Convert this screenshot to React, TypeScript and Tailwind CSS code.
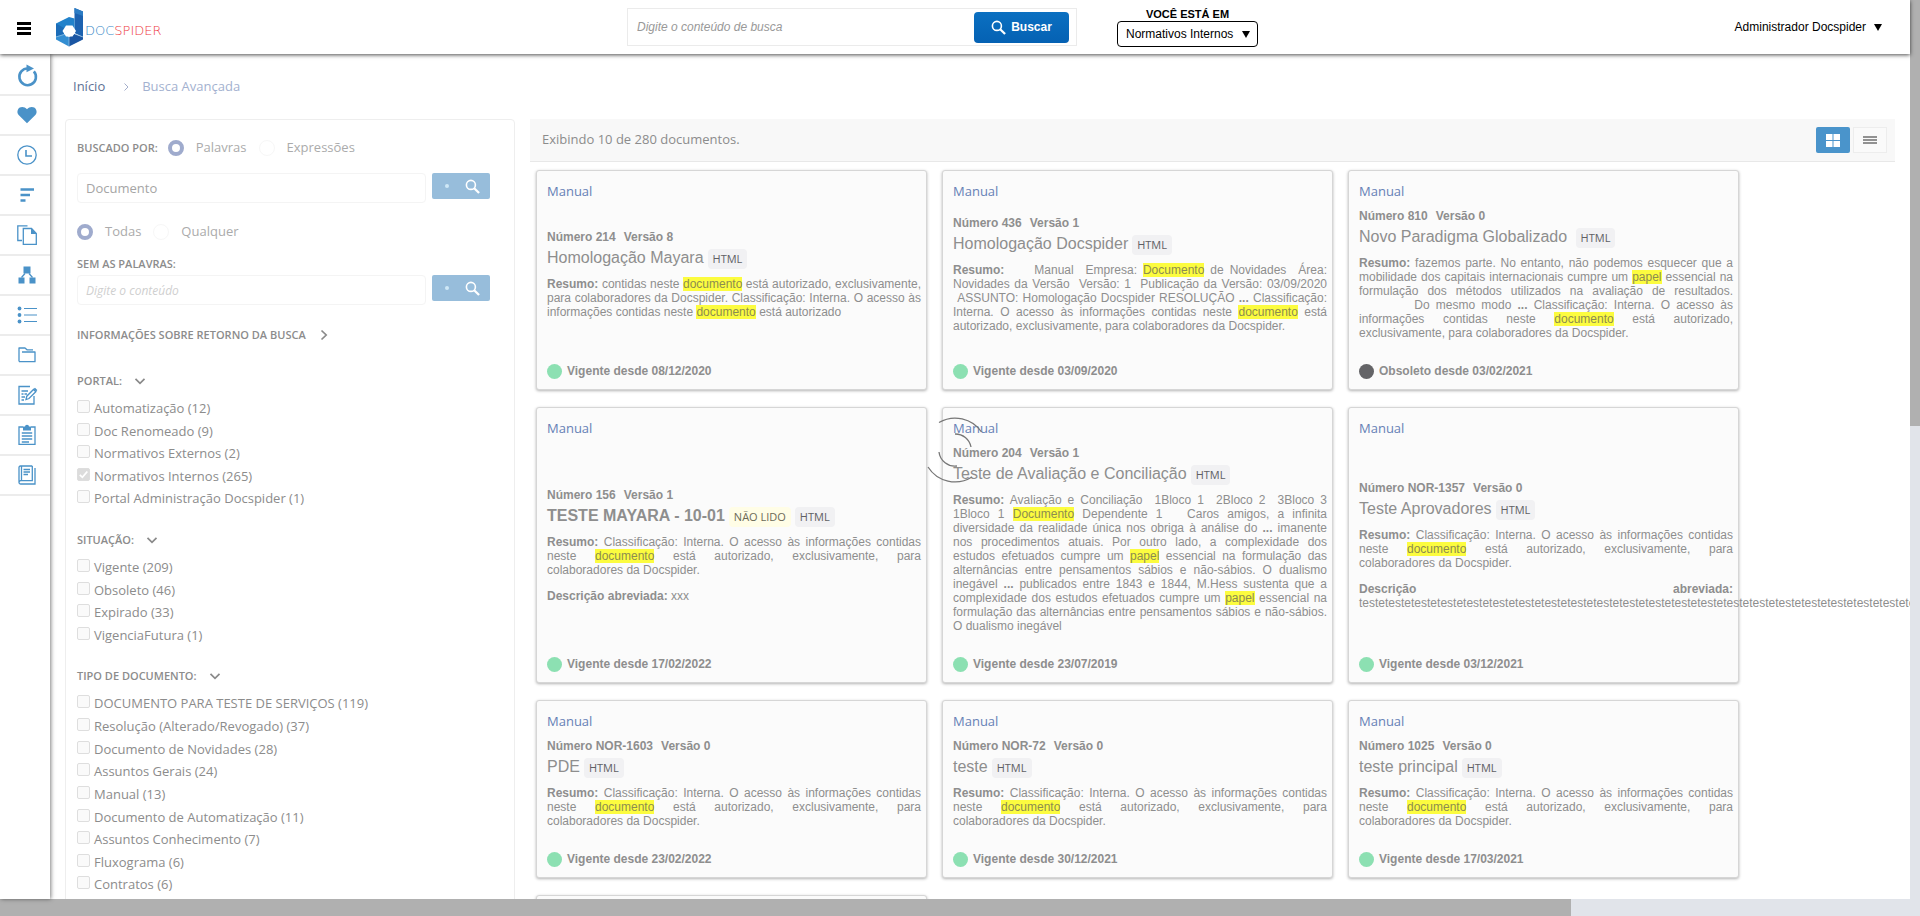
import React from "react";

const NB = "\u00a0";

const railIcons: { name: string; art: React.ReactNode }[] = [
  {
    name: "Atualizar",
    art: (
      <>
        <path d="M14.6 4.1A8.3 8.3 0 1 1 8.2 3.7" transform="rotate(22 10 11)" fill="none" strokeWidth="2.6" />
        <path d="M9.5 -0.5 17 3.500 9.5 7.2Z" stroke="none" />
      </>
    ),
  },
  {
    name: "Favoritos",
    art: <path stroke="none" d="M10 18.3 1.9 10.2A5 5 0 0 1 1 4.5C2.6 1.500 7.200 1.200 10 4.300c2.800-3.100 7.400-2.800 9 .2a5 5 0 0 1-.9 5.700Z" />,
  },
  {
    name: "Recentes",
    art: (
      <g fill="none" strokeWidth="1.3">
        <circle cx="10" cy="10" r="9.2" />
        <path d="M9 5v6h6" strokeWidth="1.6" />
      </g>
    ),
  },
  { name: "Ordenar", art: <path fill="none" strokeWidth="2.6" d="M3.500 4.500H17M3.500 10H13M3.500 15.500H8.500" /> },
  {
    name: "Copiar",
    art: (
      <>
        <path fill="none" strokeWidth="1.3" d="M5 15.500H.8V.8H10.500M6.300 3.500H14.500L19.300 8.500V19.300H6.300Z" />
        <path stroke="none" d="M14 3.300 19.500 9H14Z" />
      </>
    ),
  },
  {
    name: "Estrutura",
    art: (
      <>
        <path stroke="none" d="M6.500 1.500h7v7h-7ZM1.500 12.500h6V18.500h-6ZM12.500 12.500h6V18.500h-6Z" />
        <path fill="none" strokeWidth="1.3" d="M8 8.500 4.500 12.500M12 8.500l3.500 4" />
      </>
    ),
  },
  {
    name: "Lista",
    art: (
      <>
        <path fill="none" strokeWidth="1.200" d="M7 3.500H20M7 10H20M7 16.500H20" />
        <circle cx="2.500" cy="3.500" r="1.900" stroke="none" />
        <circle cx="2.500" cy="10" r="1.900" stroke="none" />
        <circle cx="2.500" cy="16.500" r="1.900" stroke="none" />
      </>
    ),
  },
  { name: "Pastas", art: <path fill="none" strokeWidth="1.300" strokeLinejoin="round" d="M2 16.500V3H8L10 4.800H16M5 7H18V16.700H2" /> },
  {
    name: "Editar",
    art: (
      <>
        <path fill="none" strokeWidth="1.300" d="M13 1.500H2V19H17V11M4.500 6H11M4.500 9H6.500M7.500 9H10M4.500 12H8M4.500 15H7" />
        <path fill="none" strokeWidth="1.300" d="M9 14.500l.8-3.300L16.500 4.500l2.300 2.200L12 13.500Z" />
        <path stroke="none" d="M16.500 4 18 2.800 20.300 5 19.300 6.500Z" />
      </>
    ),
  },
  {
    name: "Tarefas",
    art: (
      <>
        <path fill="none" strokeWidth="1.300" d="M6 2H2V19.300H18V2H14M4.800 8H15.200M4.800 11H15.200M4.800 14H15.200M4.800 17H12" />
        <path stroke="none" d="M6 1.500H8a2 1.800 0 0 1 4 0h2V5.500H6Z" />
      </>
    ),
  },
  {
    name: "Biblioteca",
    art: (
      <path fill="none" strokeWidth="1.300" d="M15.300 1H3.500Q2 1 2 2.500V17.500Q2 19 3.500 19H18V3M4.500 1V15.500M15.300 1V15.700H3.500Q2 16 2 17.500M6.500 4.500H13M6.500 7H13M6.500 9.500H11" />
    ),
  },
];

function Magnifier({ className }: { className: string }) {
  return (
    <svg viewBox="0 0 16 16" className={className} fill="none" stroke="currentColor" aria-hidden="true">
      <circle cx="6.300" cy="6.300" r="4.800" strokeWidth="1.700" />
      <path d="M9.800 9.800 15 15" strokeWidth="2.400" />
    </svg>
  );
}

function Chevron({ open }: { open: boolean }) {
  return (
    <svg viewBox="0 0 12 12" className="size-3" fill="none" stroke="#8a8a8a" strokeWidth="1.700" aria-hidden="true">
      {open ? <path d="M1.500 3.800 6 8.400l4.500-4.600" /> : <path d="M3.500 1.500 8.200 6l-4.700 4.500" />}
    </svg>
  );
}

function Triangle() {
  return (
    <svg viewBox="0 0 8 8" className="pointer-events-none size-2" aria-hidden="true">
      <path d="M0 1h8L4 8Z" fill="#000" />
    </svg>
  );
}

function Radio({ name, label, on }: { name: string; label: string; on?: boolean }) {
  return (
    <label className="flex items-center gap-3 text-[13px] text-[#ababab]">
      <input
        type="radio"
        name={name}
        defaultChecked={on}
        className="size-4 appearance-none rounded-full border border-[#f7f7f7] checked:border-4 checked:border-[#9fabcd]"
      />
      {label}
    </label>
  );
}

function SearchLine({ id, label, value, placeholder }: { id: string; label: string; value?: string; placeholder?: string }) {
  return (
    <div className="flex items-start gap-1.5">
      <input
        id={id}
        aria-label={label}
        defaultValue={value}
        placeholder={placeholder}
        className="h-[30px] w-[349px] rounded-sm border border-[#f4f4f4] bg-white px-2 text-[13px] text-[#a5a5a5] placeholder:text-xs placeholder:text-[#cfcfcf] placeholder:italic"
      />
      <button aria-label={"Buscar: " + label} className="flex h-[26px] w-[58px] items-center justify-end gap-4 rounded-xs bg-[#97bddb] pr-2.5 text-white">
        <span className="size-1 rounded-full bg-[#cfe8f6]" />
        <Magnifier className="size-[15px]" />
      </button>
    </div>
  );
}

function SectionTitle({ text, open }: { text: string; open: boolean }) {
  return (
    <button className="flex h-5 items-center gap-3 text-[11px] font-semibold text-[#8c8c8c]">
      {text}
      <Chevron open={open} />
    </button>
  );
}

function Facet({ title, options, checked }: { title: string; options: string[]; checked?: string }) {
  return (
    <section className="mt-5">
      <SectionTitle text={title} open />
      <ul className="mt-1.5">
        {options.map((option) => (
          <li key={option}>
            <label className="relative flex gap-1 text-[13px] leading-[1.74] whitespace-nowrap text-[#8c8c8c]">
              <input
                type="checkbox"
                defaultChecked={option === checked}
                className="peer mt-[3px] size-[13px] shrink-0 appearance-none rounded-xs border border-[#dedede] bg-[#fafafa] checked:bg-[#dcdcdc]"
              />
              <svg viewBox="0 0 13 13" className="absolute top-[3px] left-0 hidden size-[13px] peer-checked:block" fill="none" stroke="#fff" strokeWidth="1.800" aria-hidden="true">
                <path d="M2.800 6.800 5.400 9.300 10.300 3.500" />
              </svg>
              {option}
            </label>
          </li>
        ))}
      </ul>
    </section>
  );
}

const portals = ["Automatização (12)", "Doc Renomeado (9)", "Normativos Externos (2)", "Normativos Internos (265)", "Portal Administração Docspider (1)"];
const situations = ["Vigente (209)", "Obsoleto (46)", "Expirado (33)", "VigenciaFutura (1)"];
const types = [
  "DOCUMENTO PARA TESTE DE SERVIÇOS (119)",
  "Resolução (Alterado/Revogado) (37)",
  "Documento de Novidades (28)",
  "Assuntos Gerais (24)",
  "Manual (13)",
  "Documento de Automatização (11)",
  "Assuntos Conhecimento (7)",
  "Fluxograma (6)",
  "Contratos (6)",
  "Procedimento (5)",
];

interface Doc {
  number: string;
  version: string;
  title: string;
  unread?: boolean;
  summary: string;
  short?: string;
  status: string;
  obsolete?: boolean;
}

const standard = "Classificação: Interna. O acesso às informações contidas neste [documento] está autorizado, exclusivamente, para colaboradores da Docspider.";

const docs: Doc[] = [
  {
    number: "214",
    version: "8",
    title: "Homologação Mayara",
    summary:
      "contidas neste [documento] está autorizado, exclusivamente, para colaboradores da Docspider. Classificação: Interna. O acesso às informações contidas neste [documento] está autorizado",
    status: "Vigente desde 08/12/2020",
  },
  {
    number: "436",
    version: "1",
    title: "Homologação Docspider",
    summary: `${NB}${NB}${NB} Manual${NB} Empresa: [Documento] de Novidades${NB} Área: Novidades da Versão${NB} Versão: 1${NB} Publicação da Versão: 03/09/2020 ${NB}ASSUNTO: Homologação Docspider RESOLUÇÃO *...* Classificação: Interna. O acesso às informações contidas neste [documento] está autorizado, exclusivamente, para colaboradores da Docspider.`,
    status: "Vigente desde 03/09/2020",
  },
  {
    number: "810",
    version: "0",
    title: "Novo Paradigma Globalizado" + NB,
    summary: `fazemos parte. No entanto, não podemos esquecer que a mobilidade dos capitais internacionais cumpre um [papel] essencial na formulação dos métodos utilizados na avaliação de resultados. ${NB.repeat(9)}Do mesmo modo *...* Classificação: Interna. O acesso às informações contidas neste [documento] está autorizado, exclusivamente, para colaboradores da Docspider.`,
    status: "Obsoleto desde 03/02/2021",
    obsolete: true,
  },
  { number: "156", version: "1", title: "TESTE MAYARA - 10-01", unread: true, summary: standard, short: "xxx", status: "Vigente desde 17/02/2022" },
  {
    number: "204",
    version: "1",
    title: "Teste de Avaliação e Conciliação",
    summary: `Avaliação e Conciliação${NB} 1Bloco 1${NB} 2Bloco 2${NB} 3Bloco 3 1Bloco 1 [Documento] Dependente 1${NB}${NB} Caros amigos, a infinita diversidade da realidade única nos obriga à análise do *...* imanente nos procedimentos atuais. Por outro lado, a complexidade dos estudos efetuados cumpre um [papel] essencial na formulação das alternâncias entre pensamentos sábios e não-sábios. O dualismo inegável *...* publicados entre 1843 e 1844, M.Hess sustenta que a complexidade dos estudos efetuados cumpre um [papel] essencial na formulação das alternâncias entre pensamentos sábios e não-sábios. O dualismo inegável`,
    status: "Vigente desde 23/07/2019",
  },
  { number: "NOR-1357", version: "0", title: "Teste Aprovadores", summary: standard, short: "teste".repeat(40), status: "Vigente desde 03/12/2021" },
  { number: "NOR-1603", version: "0", title: "PDE", summary: standard, status: "Vigente desde 23/02/2022" },
  { number: "NOR-72", version: "0", title: "teste", summary: standard, status: "Vigente desde 30/12/2021" },
  { number: "1025", version: "0", title: "teste principal", summary: standard, status: "Vigente desde 17/03/2021" },
  { number: "1026", version: "0", title: "teste", summary: standard, status: "Vigente desde 17/03/2021" },
];

function Marked({ text }: { text: string }) {
  return (
    <>
      {text.split(/(\[[^\]]+\]|\*[^*]+\*)/).map((part, i) =>
        part.startsWith("[") ? (
          <mark key={i} className="bg-[#fcfc3f] text-[#8c8c50]">
            {part.slice(1, -1)}
          </mark>
        ) : part.startsWith("*") ? (
          <b key={i}>{part.slice(1, -1)}</b>
        ) : (
          part
        ),
      )}
    </>
  );
}

function Card({ doc }: { doc: Doc }) {
  return (
    <article className="flex min-w-0 flex-col rounded-[3px] border border-[#d6d6d6] bg-[#fbfbfb] pt-2.5 pr-[5px] pb-2 pl-2.5 font-['Liberation_Sans',Arial,sans-serif] text-xs text-[#8e8e8e] shadow-[0_1px_3px_rgba(0,0,0,0.3)]">
      <a href="#manual" className="font-['Open_Sans','Noto_Sans',sans-serif] text-[13px] leading-5 font-medium text-[#6681b6]">
        Manual
      </a>
      <div className="flex flex-1 flex-col justify-center pt-[5px]">
        <p className="leading-5 font-bold">
          Número {doc.number}
          <span className="ml-2">Versão {doc.version}</span>
        </p>
        <h2 className={doc.unread ? "flex h-[22px] items-center gap-1 text-base font-bold" : "flex h-[22px] items-center gap-1 text-base"}>
          <span className="whitespace-pre">{doc.title}</span>
          {doc.unread && <span className="mt-0.5 rounded-sm bg-[#fffde6] px-[5px] text-[11px] leading-5 font-medium text-[#6b6956] font-['Open_Sans',sans-serif]">NÃO LIDO</span>}
          <span className="mt-0.5 rounded-sm bg-[#f1f1f3] px-[5px] text-[11px] leading-5 font-medium text-[#606064] font-['Open_Sans',sans-serif]">HTML</span>
        </h2>
        <p className="mt-2 mb-3 text-justify leading-[14px]">
          <b>Resumo:</b> <Marked text={doc.summary} />
        </p>
        {doc.short && (
          <p className="text-justify leading-[14px]">
            <b>Descrição abreviada:</b> {doc.short}
          </p>
        )}
      </div>
      <p className="mt-[9px] flex items-center gap-[5px] leading-5 font-bold">
        <span className={doc.obsolete ? "size-[15px] rounded-full bg-[#646467]" : "size-[15px] rounded-full bg-[#8ce0b2]"} />
        {doc.status}
      </p>
    </article>
  );
}

function Logo() {
  return (
    <a href="#inicio" aria-label="Docspider" className="flex items-center">
      <svg viewBox="0 0 28 39" className="h-[39px] w-7" aria-hidden="true">
        <path d="M18.500 0 27 3.500V29L18.500 25Z" fill="#1c62b0" />
        <path d="M18.500 0 27 3.500V8L18.500 5Z" fill="#2b7cc4" />
        <path d="M0 15.500 13 9l5.500 1.500V22L13 19l-5 3v5L0 28.500Z" fill="#2182cb" />
        <path d="M0 15.500 8 20v7l-8 2Z" fill="#1b6cb8" />
        <path d="M0 28.500 8 26l5 3v9.500L0 31.500Z" fill="#338ed2" />
        <path d="M13 38.500V29l5.500-3 8.500 3v2.500Z" fill="#1a56a3" />
        <path d="M10 17.500h6.500L20 23l-3.500 5.500H10L6.500 23Z" fill="#fff" />
        <path d="M8 26.500 0 29M19 26l8 3M13 29v9.500" stroke="#9cc6e6" strokeWidth=".7" />
      </svg>
      <span className="mt-2 ml-px font-['DejaVu_Sans',sans-serif] text-[13px] leading-3 font-extralight text-[#2f86c6]">
        DOC<span className="text-[#ee3a40]">SPIDER</span>
      </span>
    </a>
  );
}

export default function App() {
  return (
    <div className="flex h-screen flex-col overflow-hidden bg-white font-['Open_Sans','Noto_Sans',sans-serif]">
      <div className="flex min-h-0 flex-1">
        <div className="flex min-w-0 flex-1 flex-col">
          <header className="relative z-10 flex h-[54px] shrink-0 items-center bg-white pl-[17px] font-['Liberation_Sans',Arial,sans-serif] text-xs text-black shadow-[0_1px_4px_rgba(0,0,0,0.7)]">
            <button aria-label="Menu" className="mt-0.5 mr-[25px] flex flex-col gap-0.5">
              <span className="h-[3px] w-3.5 bg-black" />
              <span className="h-[3px] w-3.5 bg-black" />
              <span className="h-[3px] w-3.5 bg-black" />
            </button>
            <div className="w-[571px]">
              <Logo />
            </div>
            <form className="flex h-[38px] w-[450px] items-center border border-[#ebebeb] pr-[7px]">
              <input aria-label="Conteúdo de busca" placeholder="Digite o conteúdo de busca" className="h-full min-w-0 flex-1 px-[9px] text-xs placeholder:text-[#999] placeholder:italic" />
              <button type="button" className="flex h-[31px] w-[95px] items-center justify-center gap-[5px] rounded-sm bg-linear-to-b from-[#0b70c1] to-[#0561b3] text-xs font-bold text-white">
                <Magnifier className="size-[15px]" />
                Buscar
              </button>
            </form>
            <div className="ml-10 flex w-[141px] flex-col items-center">
              <label htmlFor="portal" className="text-[11px] leading-[13px] font-bold">
                VOCÊ ESTÁ EM
              </label>
              <div className="relative flex w-full items-center">
                <select id="portal" className="h-[26px] w-full appearance-none rounded-sm border border-black bg-white pl-2">
                  <option>Normativos Internos</option>
                </select>
                <span className="pointer-events-none absolute right-2">
                  <Triangle />
                </span>
              </div>
            </div>
            <button className="mr-7 ml-auto flex items-center gap-2">
              Administrador Docspider
              <Triangle />
            </button>
          </header>

          <div className="flex min-h-0 flex-1">
            <nav className="relative w-[50px] shrink-0 bg-white pt-0.5 shadow-[1px_0_4px_rgba(0,0,0,0.5)]">
              {railIcons.map((icon) => (
                <a key={icon.name} href={"#" + icon.name} aria-label={icon.name} className="flex h-10 items-center justify-center border-b-2 border-[#ececec] pl-1">
                  <svg viewBox="0 0 20 20" className="size-5 overflow-visible" fill="#4a92c8" stroke="#4a92c8" aria-hidden="true">
                    {icon.art}
                  </svg>
                </a>
              ))}
            </nav>

            <main className="min-w-0 flex-1 overflow-hidden px-[15px]">
              <nav aria-label="Trilha" className="flex h-[65px] items-center pl-2 text-[13px]">
                <a href="#inicio" className="text-[#5d7195]">
                  Início
                </a>
                <svg viewBox="0 0 8 8" className="mr-3 ml-[17px] size-2" fill="none" stroke="#a3aecb" aria-hidden="true">
                  <path d="M2.500.5 6 4 2.500 7.500" />
                </svg>
                <span className="text-[#a3b1cf]">Busca Avançada</span>
              </nav>

              <div className="flex items-start gap-[15px]">
                <aside className="w-[450px] shrink-0 rounded-sm border border-[#eeeeee] px-[11px] pt-[18px] pb-6">
                  <div className="flex h-5 items-center gap-3">
                    <span className="-mr-0.5 text-[11px] font-semibold text-[#8c8c8c]">BUSCADO POR:</span>
                    <Radio name="mode" label="Palavras" on />
                    <Radio name="mode" label="Expressões" />
                  </div>
                  <div className="mt-[15px]">
                    <SearchLine id="with" label="Com as palavras" value="Documento" />
                  </div>
                  <div className="mt-[19px] flex h-5 items-center gap-3">
                    <Radio name="match" label="Todas" on />
                    <Radio name="match" label="Qualquer" />
                  </div>
                  <label htmlFor="without" className="mt-3 mb-px block text-[11px] leading-5 font-semibold text-[#8c8c8c]">
                    SEM AS PALAVRAS:
                  </label>
                  <SearchLine id="without" label="Sem as palavras" placeholder="Digite o conteúdo" />
                  <div className="mt-5 mb-[26px]">
                    <SectionTitle text="INFORMAÇÕES SOBRE RETORNO DA BUSCA" open={false} />
                  </div>
                  <Facet title="PORTAL:" options={portals} checked="Normativos Internos (265)" />
                  <Facet title="SITUAÇÃO:" options={situations} />
                  <Facet title="TIPO DE DOCUMENTO:" options={types} />
                </aside>

                <section className="min-w-0 flex-1">
                  <div className="flex h-[43px] items-center justify-between border-b border-[#e8e8e8] bg-[#f8f8f8] pr-2 pl-3">
                    <p className="text-[13px] text-[#8c8c8c]">Exibindo 10 de 280 documentos.</p>
                    <div className="flex gap-[3px]">
                      <button aria-label="Grade" className="flex h-[26px] w-[34px] items-center justify-center rounded-xs bg-[#4a94cb]">
                        <svg viewBox="0 0 14 13" className="h-[13px] w-3.5" fill="#fff" aria-hidden="true">
                          <path d="M0 0h6.500v6H0ZM7.500 0H14v6H7.500ZM0 7h6.500v6H0ZM7.500 7H14v6H7.500Z" />
                        </svg>
                      </button>
                      <button aria-label="Lista" className="flex h-[26px] w-[34px] items-center justify-center border border-[#ededed] bg-[#fafafa]">
                        <svg viewBox="0 0 14 8" className="h-2 w-3.5" fill="#929292" aria-hidden="true">
                          <path d="M0 0h14v2H0ZM0 3h14v2H0ZM0 6h14v2H0Z" />
                        </svg>
                      </button>
                    </div>
                  </div>
                  <div className="mt-2 ml-1.5 grid grid-cols-[repeat(3,minmax(0,391px))] gap-x-[15px] gap-y-[17px]">
                    {docs.map((doc) => (
                      <Card key={doc.number} doc={doc} />
                    ))}
                  </div>
                </section>
              </div>
            </main>
          </div>
        </div>
        <div className="w-2.5 shrink-0 bg-[#e1e4ea]">
          <div className="h-[47.4%] bg-[#b0b0b0]" />
        </div>
      </div>
      <div className="h-[17px] shrink-0 bg-[#e1e4ea]">
        <div className="h-full w-[81.8%] bg-[#b0b0b0]" />
      </div>
      <svg viewBox="-34 -34 68 68" className="pointer-events-none fixed top-1/2 left-1/2 -mt-[42px] -ml-[39px] size-[68px]" fill="none" stroke="#777" strokeWidth="1.300" aria-label="Carregando">
        <path d="M-16-27.500A32 32 0 0 1 26.500-18M-27 17A32 32 0 0 0 17 27" />
        <path d="M0-16A16 16 0 0 1 16-3M-16 2A16 16 0 0 0 2 16" />
      </svg>
    </div>
  );
}
